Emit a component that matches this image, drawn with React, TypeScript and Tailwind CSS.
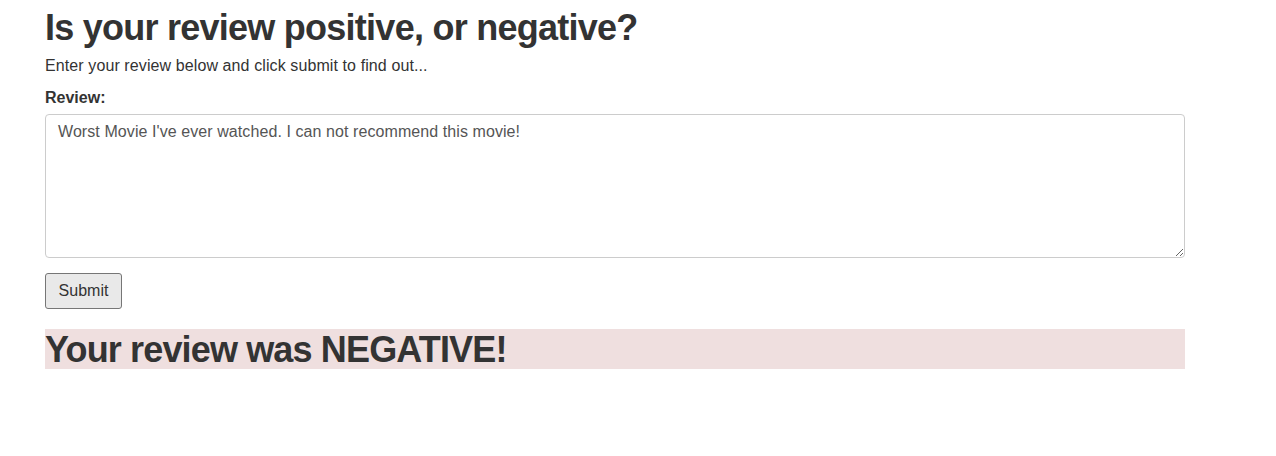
export default function App() {
  return (
    <div
      className="min-h-[456px] bg-white text-[#333]"
      style={{ fontFamily: '"Liberation Sans", Arial, sans-serif' }}
    >
      <div className="w-[1140px] ml-[45px] pt-[8px]">
        <h1 className="text-[36px] leading-[1.1] font-bold tracking-[-0.75px]">
          Is your review positive, or negative?
        </h1>
        <p className="text-[16px] leading-[22px] mt-[7px] tracking-[0.1px]">
          Enter your review below and click submit to find out...
        </p>
        <form className="mt-[10px]">
          <label className="block text-[16px] leading-[22px] font-bold mb-[5px]">
            Review:
          </label>
          <textarea
            className="block w-full h-[144px] border border-[#ccc] rounded-[4px] px-[12px] py-[6px] text-[16px] leading-[22px] text-[#555] tracking-[0.08px] outline-none resize-y"
            defaultValue="Worst Movie I've ever watched. I can not recommend this movie!"
          />
          <button
            type="button"
            className="mt-[15px] h-[36px] w-[77px] border border-[#767676] rounded-[3px] bg-[#e9e9e9] text-[16px] text-[#333]"
          >
            Submit
          </button>
        </form>
        <div className="mt-[20px] bg-[#efdfdf] h-[40px]">
          <h1 className="text-[36px] leading-[42px] font-bold tracking-[-0.85px]">
            Your review was NEGATIVE!
          </h1>
        </div>
      </div>
    </div>
  );
}
